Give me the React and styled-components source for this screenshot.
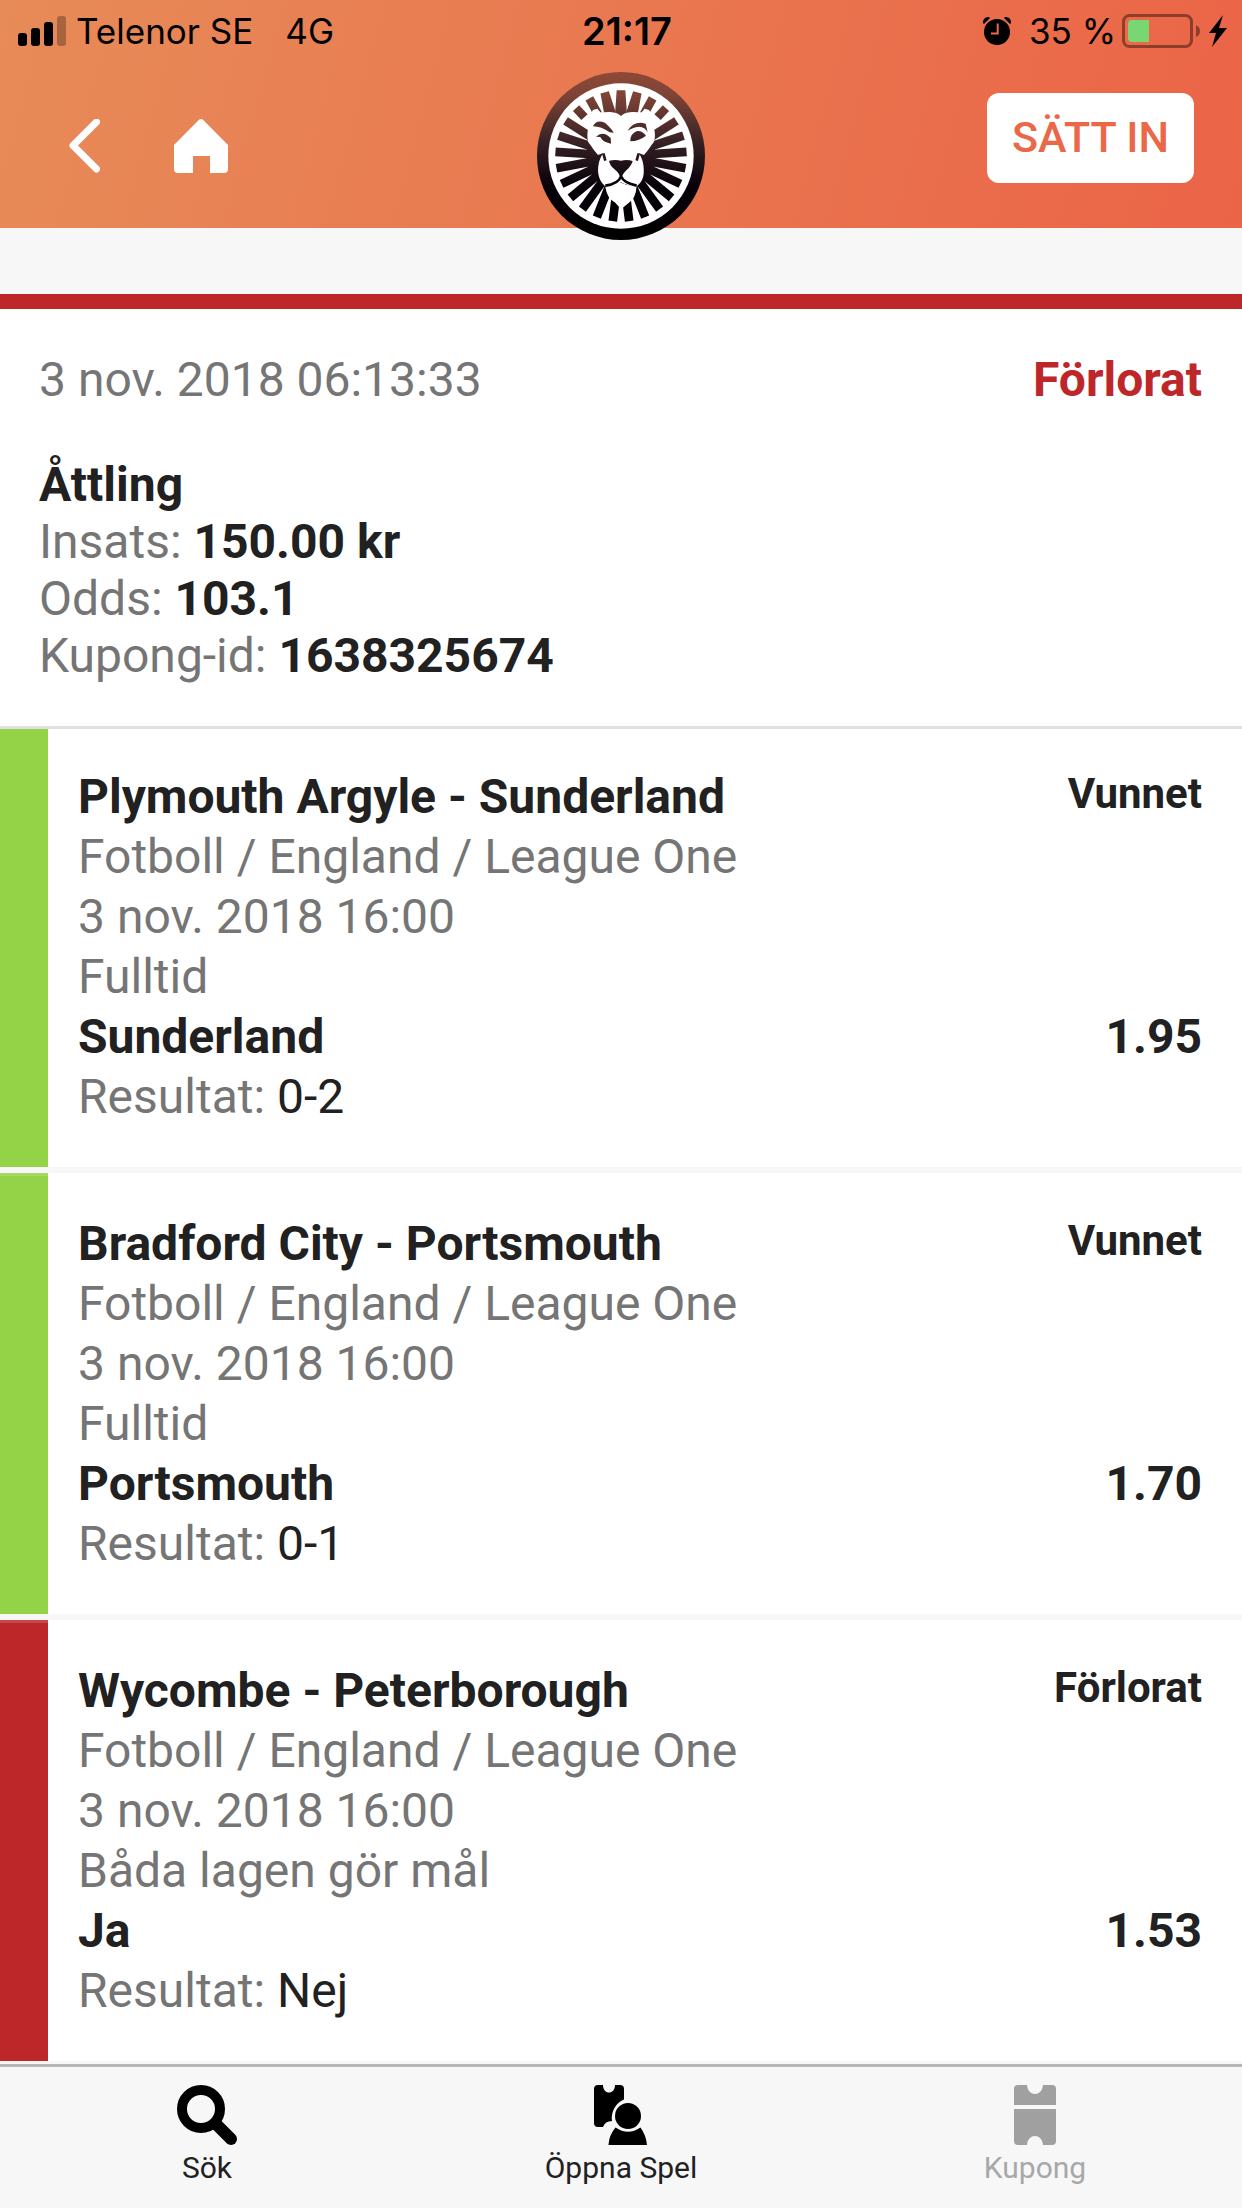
import styled, { createGlobalStyle } from "styled-components"

const slips = [
  {
    match: "Plymouth Argyle - Sunderland",
    league: "Fotboll / England / League One",
    date: "3 nov. 2018 16:00",
    market: "Fulltid",
    pick: "Sunderland",
    odds: "1.95",
    result: "0-2",
    status: "Vunnet",
    won: true,
  },
  {
    match: "Bradford City - Portsmouth",
    league: "Fotboll / England / League One",
    date: "3 nov. 2018 16:00",
    market: "Fulltid",
    pick: "Portsmouth",
    odds: "1.70",
    result: "0-1",
    status: "Vunnet",
    won: true,
  },
  {
    match: "Wycombe - Peterborough",
    league: "Fotboll / England / League One",
    date: "3 nov. 2018 16:00",
    market: "Båda lagen gör mål",
    pick: "Ja",
    odds: "1.53",
    result: "Nej",
    status: "Förlorat",
    won: false,
  },
]

export default function App() {
  return (
    <Page>
      <GlobalStyle />
      <Header>
        <StatusBar />
        <Toolbar />
      </Header>
      <Main>
        <Summary />
        {slips.map((slip) => (
          <BetRow key={slip.match} {...slip} />
        ))}
      </Main>
      <TabBar />
    </Page>
  )
}

function StatusBar() {
  return (
    <StatusContainer>
      <StatusSide>
        <svg width="48" height="30" viewBox="0 0 48 30">
          <rect x="0" y="17" width="9" height="13" rx="3" />
          <rect x="13" y="12" width="9" height="18" rx="3" />
          <rect x="26" y="6" width="9" height="24" rx="3" />
          <rect x="39" y="0" width="9" height="30" rx="3" opacity="0.27" />
        </svg>
        <Carrier>Telenor SE</Carrier>
        <span>4G</span>
      </StatusSide>
      <Clock>21:17</Clock>
      <StatusSide $end>
        <AlarmIcon />
        <Percent>35 %</Percent>
        <BatteryIcon />
      </StatusSide>
    </StatusContainer>
  )
}

function AlarmIcon() {
  return (
    <svg width="28" height="28" viewBox="0 0 28 28">
      <circle cx="14" cy="15" r="13" />
      <path d="M0 6C0 2 2 0 6 0L7 1 1 7Z" />
      <path d="M28 6C28 2 26 0 22 0L21 1 27 7Z" />
      <path d="M14.7 6.5V16.5H8" fill="none" stroke="#ea6c4a" strokeWidth="2" />
    </svg>
  )
}

function BatteryIcon() {
  return (
    <svg width="106" height="34" viewBox="0 0 106 34">
      <rect x="1.5" y="1.5" width="68" height="31" rx="6" fill="none" stroke="#000" strokeWidth="3" opacity="0.4" />
      <path d="M27 6V28H10Q6 28 6 24V10Q6 6 10 6Z" fill="#78d673" />
      <path d="M74 11Q78 13 78 17T74 23Z" opacity="0.4" />
      <path d="M101 1L87 19H94L90 33 105 14H97Z" />
    </svg>
  )
}

function Toolbar() {
  return (
    <ToolbarContainer>
      <ToolbarGroup>
        <IconButton aria-label="Tillbaka">
          <svg width="32" height="54" viewBox="0 0 32 54">
            <path
              d="M28.500 3L5 26.500 28.500 50"
              fill="none"
              stroke="#fff"
              strokeWidth="7"
              strokeLinecap="round"
              strokeLinejoin="round"
            />
          </svg>
        </IconButton>
        <IconButton aria-label="Hem">
          <svg width="54" height="54" viewBox="0 0 54 54">
            <path
              d="M24.500 1.200Q27-1 29.500 1.200L54 26V50Q54 54 50 54H36V37H19V54H4Q0 54 0 50V26Z"
              fill="#fff"
            />
          </svg>
        </IconButton>
      </ToolbarGroup>
      <Logo href="#">
        <LionLogo />
      </Logo>
      <DepositArea>
        <DepositButton>SÄTT IN</DepositButton>
      </DepositArea>
    </ToolbarContainer>
  )
}

// The mane is 25 rays, the first one straight up
const RAYS = 25

function rayPath(i) {
  const fromTop = Math.min(i, RAYS - i)
  const angle = (i * 2 * Math.PI) / RAYS
  const inner = fromTop < 2 ? 110 : fromTop === 3 ? 160 : 96
  const innerHalf = fromTop < 2 ? 19 : 13
  const point = (radius, side) => {
    const x = 252 + radius * Math.sin(angle) + side * Math.cos(angle)
    const y = 252 - radius * Math.cos(angle) + side * Math.sin(angle)
    return `${x.toFixed(1)} ${y.toFixed(1)}`
  }
  return `M${point(197, -13)}L${point(197, 13)} ${point(inner, innerHalf)} ${point(inner, -innerHalf)}Z`
}

function LionLogo() {
  return (
    <svg width="168" height="168" viewBox="0 0 504 504" role="img" aria-label="Leo">
      <defs>
        <linearGradient id="mane" gradientUnits="userSpaceOnUse" x1="0" y1="0" x2="0" y2="504">
          <stop offset="0" stopColor="#8e4936" />
          <stop offset="0.14" stopColor="#7d4436" />
          <stop offset="0.42" stopColor="#362124" />
          <stop offset="0.68" stopColor="#07000a" />
          <stop offset="1" stopColor="#000" />
        </linearGradient>
      </defs>
      <circle cx="252" cy="252" r="252" fill="url(#mane)" />
      <circle cx="252" cy="252" r="218" fill="#fff" />
      <g fill="url(#mane)">
        <circle cx="252" cy="252" r="104" />
        {Array.from({ length: RAYS }, (_, i) => (
          <path key={i} d={rayPath(i)} />
        ))}
      </g>
      <path
        d="M252 132C236 116 210 120 190 121L181 110 168 114 158 130 156 158C149 183 151 200 154 211C163 222 170 235 183 249L199 243C183 265 182 292 184 305C187 322 193 332 204 342C216 349 222 342 247 334L252 331 257 334C282 342 288 349 300 342C312 332 318 322 320 305C321 292 321 265 305 243L321 249C334 235 341 222 350 211C355 200 356 183 348 158L346 130 336 114 323 110 314 121C294 120 268 116 252 132Z"
        fill="#fff"
      />
      <path d="M205 345Q230 326 252 332Q276 344 299 341Q297 379 274 394L252 412 235 392Q210 380 205 345Z" fill="#fff" />
      <g fill="url(#mane)">
        <path d="M168 163Q178 141 205 153Q225 172 230 182L218 181Q193 163 168 163ZM271 177Q291 145 326 155L332 181Q324 165 306 164Q286 166 271 177Z" />
        <path d="M177 194Q198 174 221 198L222 215Q196 210 190 195ZM280 208Q279 185 300 177Q316 175 327 191Q307 207 280 208Z" />
        <path d="M216 266Q236 262 252 266Q271 262 287 267C282 287 265 295 258 307L252 318 246 307C240 292 220 289 216 266Z" />
        <path
          d="M252 304V313Q245 335 205 341M252 313Q260 333 299 341M199 244L205 266M305 244L299 266"
          fill="none"
          stroke="url(#mane)"
          strokeWidth="8"
        />
      </g>
    </svg>
  )
}

function Summary() {
  return (
    <SummaryContainer>
      <SummaryTop>
        <time>3 nov. 2018 06:13:33</time>
        <Outcome>Förlorat</Outcome>
      </SummaryTop>
      <Strong as="h1">Åttling</Strong>
      <p>
        Insats: <Strong>150.00 kr</Strong>
      </p>
      <p>
        Odds: <Strong>103.1</Strong>
      </p>
      <p>
        Kupong-id: <Strong>1638325674</Strong>
      </p>
    </SummaryContainer>
  )
}

function BetRow({ match, league, date, market, pick, odds, result, status, won }) {
  return (
    <Row $won={won}>
      <Line>
        <Strong as="h2">{match}</Strong>
        <RowStatus>{status}</RowStatus>
      </Line>
      <p>{league}</p>
      <p>{date}</p>
      <p>{market}</p>
      <Line>
        <Strong>{pick}</Strong>
        <Strong>{odds}</Strong>
      </Line>
      <p>
        Resultat: <Dark>{result}</Dark>
      </p>
    </Row>
  )
}

function TabBar() {
  return (
    <Tabs>
      <Tab>
        <svg width="60" height="60" viewBox="0 0 60 60">
          <circle cx="24" cy="24" r="19" fill="none" stroke="#000" strokeWidth="10" />
          <path d="M39 39L54 54" stroke="#000" strokeWidth="12" strokeLinecap="round" />
        </svg>
        Sök
      </Tab>
      <Tab>
        <svg width="54" height="60" viewBox="0 0 54 60">
          <path d="M4 0H9C9 10 21 10 21 0H26Q30 0 30 4V14.500A20 20 0 0 0 18 36Q11 36 9 42H4Q0 42 0 38V4Q0 0 4 0Z" />
          <circle cx="34" cy="31" r="13" />
          <path d="M21.500 42.500Q34 51 46.500 42.500Q52 50 53 60H14.500Q15 50 21.500 42.500Z" />
        </svg>
        Öppna Spel
      </Tab>
      <Tab disabled>
        <svg width="42" height="60" viewBox="0 0 42 60" fill="#a0a0a0">
          <path d="M4 0H13C14 12 28 12 29 0H38Q42 0 42 4V20H0V4Q0 0 4 0Z" />
          <path d="M0 24H42V56Q42 60 38 60H29C28 48 14 48 13 60H4Q0 60 0 56Z" />
        </svg>
        Kupong
      </Tab>
    </Tabs>
  )
}

const GlobalStyle = createGlobalStyle`
  * {
    box-sizing: border-box;
  }
  body, h1, h2, p {
    margin: 0;
  }
  body {
    background-color: #f7f7f7;
    font-family: Roboto, sans-serif;
    font-size: 48px;
    color: #757575;
  }
  button {
    border: none;
    background: none;
    padding: 0;
    font-family: inherit;
    cursor: pointer;
  }
  svg {
    display: block;
    flex-shrink: 0;
  }
`

const Page = styled.div`
  min-height: 100vh;
  display: flex;
  flex-direction: column;
`

const Header = styled.header`
  height: 228px;
  background: linear-gradient(105deg, #e78b58, #eb6447);
`

const StatusContainer = styled.div`
  padding: 0 14px 0 18px;
  display: grid;
  grid-template-columns: 1fr auto 1fr;
  align-items: center;
  font-family: Inter, sans-serif;
  font-size: 35px;
  line-height: 62px;
  color: #000000;
`

const StatusSide = styled.div`
  display: flex;
  align-items: center;
  justify-content: ${({ $end }) => ($end ? "flex-end" : "flex-start")};
`

const Carrier = styled.span`
  margin: 0 32px 0 10px;
`

const Percent = styled.span`
  margin: 0 6px 0 18px;
`

const Clock = styled.span`
  padding-left: 8px;
  font-size: 38px;
  font-weight: 600;
`

const ToolbarContainer = styled.div`
  padding: 10px 48px 0;
  display: grid;
  grid-template-columns: 1fr auto 1fr;
  align-items: start;
`

const ToolbarGroup = styled.div`
  display: flex;
  gap: 74px;
  padding: 47px 0 0 20px;
`

const IconButton = styled.button`
  display: block;
`

const Logo = styled.a`
  display: block;
`

const DepositArea = styled.div`
  display: flex;
  justify-content: flex-end;
  padding-top: 21px;
`

const DepositButton = styled.button`
  padding: 0 25px 2px;
  border-radius: 12px;
  background-color: #ffffff;
  font-size: 43px;
  font-weight: 500;
  line-height: 88px;
  color: #ea6848;
`

const Main = styled.main`
  flex: 1;
  margin-top: 66px;
`

const SummaryContainer = styled.section`
  padding: 42px 40px 42px 39px;
  border-top: 15px solid #be2729;
  background-color: #ffffff;
  line-height: 57px;
`

const SummaryTop = styled.div`
  display: flex;
  justify-content: space-between;
  margin-bottom: 48px;
`

const Strong = styled.strong`
  font-size: 48px;
  font-weight: 700;
  color: #212121;
`

const Outcome = styled(Strong)`
  color: #be2729;
`

const Row = styled.article`
  padding: 38px 40px 40px 78px;
  border-top: 3px solid #e0e0e0;
  background-color: #ffffff;
  background-image: linear-gradient(${({ $won }) => ($won ? "#94d247" : "#be2729")} 0 0);
  background-size: 48px 100%;
  background-repeat: no-repeat;
  line-height: 60px;

  & + & {
    margin-top: 6px;
    border-top-color: rgba(255, 255, 255, 0.15);
    background-origin: border-box;
  }
`

const Line = styled.div`
  display: flex;
  justify-content: space-between;
`

const RowStatus = styled.span`
  font-size: 42px;
  font-weight: 700;
  line-height: 54px;
  color: #212121;
`

const Dark = styled.span`
  color: #212121;
`

const Tabs = styled.nav`
  display: grid;
  grid-template-columns: repeat(3, 1fr);
  height: 144px;
  border-top: 3px solid #b7b7b7;
`

const Tab = styled.button`
  display: flex;
  flex-direction: column;
  align-items: center;
  padding-top: 18px;
  font-size: 30px;
  line-height: 46px;
  color: ${({ disabled }) => (disabled ? "#a8a8a8" : "#212121")};
`
